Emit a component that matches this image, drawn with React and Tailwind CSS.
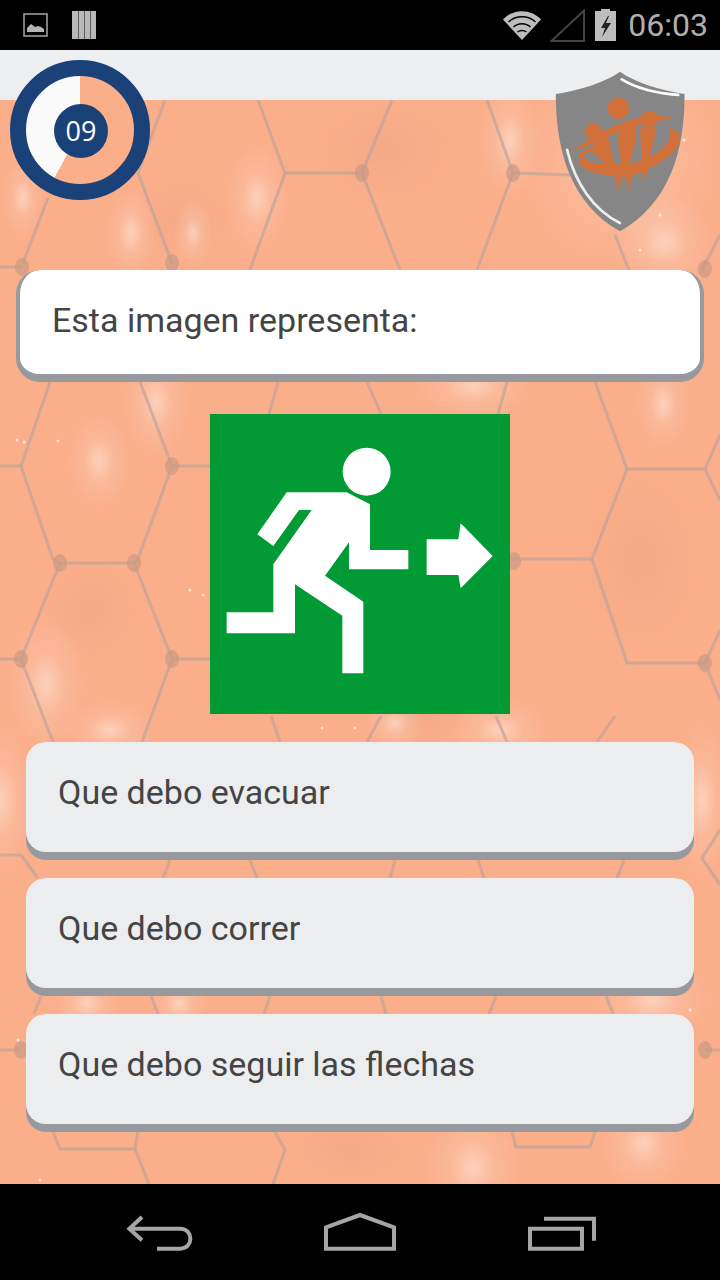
import React from 'react';

const options = ['Que debo evacuar', 'Que debo correr', 'Que debo seguir las flechas'];

// hexagon mesh of the wallpaper, in page coordinates
const hexLines = [
  '258,100 285,173 250,270',
  '285,173 362,173',
  '392,100 362,173 400,270',
  '487,100 513,173 477,270',
  '513,173 570,175',
  '165,100 138,173 172,263',
  '48,198 23,263',
  '0,267 22,267',
  '615,235 629,270',
  '720,235 702,270',
  '50,382 21,466 53,559 60,563 134,563 138,559 172,466 140,382',
  '0,466 21,466',
  '172,466 210,466',
  '595,382 627,469 705,469 720,500',
  '705,469 720,435',
  '627,469 592,559 510,559',
  '592,559 627,663 705,663 720,700',
  '705,663 720,630',
  '60,563 21,659 53,742',
  '134,563 172,659 142,742',
  '0,659 21,659',
  '172,659 210,659',
  '278,382 269,414',
  '367,382 381,414',
  '507,382 498,414',
  '271,716 280,742',
  '381,716 367,742',
  '496,716 507,742',
  '615,716 597,742',
  '0,855 21,855 38,878',
  '170,860 163,878',
  '250,860 257,878',
  '395,860 390,878',
  '478,860 484,878',
  '624,860 617,878',
  '720,830 702,858 720,885',
  '41,996 34,1014',
  '151,996 158,1014',
  '270,996 264,1014',
  '381,996 386,1014',
  '496,996 489,1014',
  '606,996 613,1014',
  '0,1050 21,1050',
  '705,1050 720,1050',
  '53,1132 60,1149 135,1149 138,1132',
  '135,1149 149,1184',
  '275,1132 285,1150 273,1184',
  '512,1132 516,1147 590,1147 595,1132',
];

const hexNodes = [
  [362, 173], [513, 173], [22, 267], [172, 263], [705, 269], [172, 466], [60, 563], [134, 563],
  [514, 561], [21, 659], [172, 659], [705, 663], [21, 1050], [705, 1050],
];

const glows = [
  [131, 233, 26, 46], [193, 233, 20, 36], [257, 198, 32, 56], [23, 198, 22, 40], [510, 141, 32, 60],
  [99, 461, 32, 50], [663, 404, 28, 46], [46, 684, 40, 70], [156, 402, 34, 56], [473, 386, 60, 34],
  [665, 243, 50, 50], [473, 1167, 50, 60], [643, 1143, 44, 50], [395, 723, 30, 28], [110, 730, 46, 32],
  [87, 1003, 36, 34], [179, 1003, 30, 34], [0, 800, 36, 80], [702, 800, 30, 80], [652, 1000, 60, 44],
  [620, 160, 100, 110], [500, 730, 50, 34],
];

// faint darker patches in the middle of some cells
const shades = [
  [385, 150, 70, 50], [180, 220, 50, 40], [640, 560, 60, 90], [90, 610, 50, 50], [350, 1150, 60, 30], [420, 720, 50, 20],
];

const sparkles = [
  [17, 440], [24, 442], [190, 590], [203, 595], [322, 728], [355, 728], [18, 1040], [40, 1180],
  [58, 441], [690, 1010], [684, 140], [660, 215], [640, 250],
];

function Wallpaper() {
  return (
    <svg className="absolute inset-x-0 top-[50px] w-[720px] h-[1084px] blur-[0.6px]" viewBox="0 100 720 1084">
      <defs>
        <radialGradient id="glow">
          <stop offset="0%" stopColor="#fff" stopOpacity="0.42" />
          <stop offset="45%" stopColor="#fff" stopOpacity="0.14" />
          <stop offset="100%" stopColor="#fff" stopOpacity="0" />
        </radialGradient>
        <radialGradient id="shade">
          <stop offset="0%" stopColor="#c98f70" stopOpacity="0.13" />
          <stop offset="100%" stopColor="#c98f70" stopOpacity="0" />
        </radialGradient>
      </defs>
      {shades.map(([cx, cy, rx, ry]) => (
        <ellipse key={`${cx}-${cy}`} cx={cx} cy={cy} rx={rx} ry={ry} fill="url(#shade)" />
      ))}
      {glows.map(([cx, cy, rx, ry]) => (
        <ellipse key={`${cx}-${cy}`} cx={cx} cy={cy} rx={rx} ry={ry} fill="url(#glow)" />
      ))}
      {hexLines.map((points) => (
        <polyline key={points} points={points} fill="none" stroke="#b8a39a" strokeOpacity="0.65" strokeWidth="3" />
      ))}
      {hexNodes.map(([cx, cy]) => (
        <ellipse key={`${cx}-${cy}`} cx={cx} cy={cy} rx="7" ry="9" fill="#c99a82" fillOpacity="0.7" />
      ))}
      {sparkles.map(([cx, cy]) => (
        <circle key={`${cx}-${cy}`} cx={cx} cy={cy} r="1.5" fill="#fff" fillOpacity="0.7" />
      ))}
    </svg>
  );
}

function StatusBar() {
  return (
    <div className="h-[50px] shrink-0 bg-black flex items-center pl-[23px] pr-[12px]">
      <svg width="25" height="24" viewBox="0 0 25 24">
        <rect x="1" y="1" width="23" height="22" fill="none" stroke="#a8a8a8" strokeWidth="1.5" />
        <path d="M4 19v-4l4-4 4 3 3-1 3 1 3 2v3z" fill="#b4b4b4" />
      </svg>
      <svg className="ml-[24px]" width="24" height="30" viewBox="0 0 24 30">
        <path d="M0 1h6v28H0zM6.500 1h5.500v28H6.500zM12.500 1h5.500v28h-5.500zM18.500 1h5.500v28h-5.500z" fill="#b8b8b8" />
      </svg>
      <div className="ml-auto flex items-center">
        <svg width="38" height="29" viewBox="0 0 38 29">
          <path d="M0 8.500C10-2.500 28-2.500 38 8.500L19 29z" fill="#bdbdbd" />
          <path d="M5.500 11C13 4 25 4 32.500 11" fill="none" stroke="#000" strokeWidth="1.500" />
          <path d="M10.500 16C15 11.500 23 11.500 27.500 16" fill="none" stroke="#000" strokeWidth="1.500" />
          <path d="M14.500 21C17 19 21 19 23.500 21" fill="none" stroke="#000" strokeWidth="1.500" />
        </svg>
        <svg className="ml-[9px]" width="35" height="33" viewBox="0 0 35 33">
          <path d="M1.500 32 34 1.500V32z" fill="none" stroke="#444" strokeWidth="2" />
        </svg>
        <svg className="ml-[10px]" width="21" height="32" viewBox="0 0 21 32">
          <path d="M6 0h9v2h6v30H0V2h6z" fill="#bdbdbd" />
          <path d="M13 7 6 19h4l-3 9 9-14h-5l3-7z" fill="#222" />
        </svg>
        <span className="ml-[12px] text-[32px] leading-[50px] text-[#b0b0b0] font-['Roboto',sans-serif]">06:03</span>
      </div>
    </div>
  );
}

function Timer() {
  return (
    <div className="w-[140px] h-[140px] rounded-full border-[16px] border-[#1a4278] bg-[conic-gradient(#fbae8a_0deg_208deg,#fafafa_208deg)] flex items-center justify-center">
      <div className="ml-[2px] mt-[2px] w-[54px] h-[54px] rounded-full bg-[#1a4278] flex items-center justify-center text-[27px] text-white font-['Open_Sans',sans-serif]">
        09
      </div>
    </div>
  );
}

function Shield() {
  return (
    <svg width="130" height="163" viewBox="195 210 390 490">
      <path d="M390 215C340 250 270 270 197 282C197 450 240 610 390 695C540 610 585 450 584 282C510 270 440 250 390 215z" fill="#868686" />
      <path d="M395 238C440 265 500 280 565 285" fill="none" stroke="#fff" strokeWidth="8" strokeLinecap="round" />
      <path d="M231 450C255 550 310 630 390 670" fill="none" stroke="#eee" strokeWidth="8" strokeLinecap="round" />
      <g fill="#d2703a">
        <circle cx="385" cy="325" r="32" />
        <circle cx="478" cy="358" r="26" />
        <circle cx="310" cy="395" r="25" />
        <path d="M248 456C310 400 400 360 470 350C500 345 530 348 552 358C500 358 430 375 375 400C330 420 285 440 248 456z" />
        <path d="M300 442C270 455 258 475 270 495C290 520 340 525 372 528L386 572L396 530L408 530L415 572L428 526C440 524 450 520 458 517L462 542L478 505C520 485 565 455 570 420C572 400 555 388 535 382C548 400 540 425 515 448C480 475 440 490 405 492C350 495 300 490 285 478C278 468 290 458 305 452z" />
        <path d="M322 415 352 405 372 490 340 488 300 450z" />
        <path d="M385 385 440 368 435 430 418 495H395L385 440z" />
        <path d="M450 385H500L490 430 470 495H455z" />
      </g>
    </svg>
  );
}

function ExitSign() {
  return (
    <div className="w-[300px] h-[300px] mx-auto bg-[#029a35]">
      <svg className="blur-[0.5px]" width="300" height="300" viewBox="30 27 900 900">
        <g fill="#fff">
          <ellipse cx="500" cy="200" rx="72" ry="72" />
          <path d="M172 388 260 262H440L510 298V435H625V493H447V412L375 512 490 590V805H427V632L285 538V685H80V622H220V478L335 315H297L220 423z" />
          <path d="M680 403H775L782 355 878 453 782 550 775 510H680z" />
        </g>
      </svg>
    </div>
  );
}

function NavBar() {
  return (
    <div className="h-[96px] shrink-0 bg-black grid grid-cols-3 px-[60px] items-center justify-items-center">
      <svg width="72" height="40" viewBox="71 70 216 120" fill="none" stroke="#a6a6a6" strokeWidth="12">
        <path d="M125 85 87 120 125 155" />
        <path d="M87 120H240C280 120 280 180 240 180H170" />
      </svg>
      <svg width="72" height="40" viewBox="672 70 216 120" fill="none" stroke="#a6a6a6" strokeWidth="12">
        <path d="M678 180V116L780 79 882 116V180z" />
      </svg>
      <svg className="ml-[4px]" width="72" height="40" viewBox="1278 70 216 120" fill="none" stroke="#a6a6a6" strokeWidth="12">
        <path d="M1290 120H1446V180H1290z" />
        <path d="M1332 90H1482V156" />
      </svg>
    </div>
  );
}

export default function App() {
  return (
    <div className="w-[720px] h-[1280px] flex flex-col bg-black overflow-hidden font-['Roboto',sans-serif]">
      <StatusBar />

      <div className="relative flex-1 bg-[#fbae8a]">
        <div className="absolute inset-x-0 top-0 h-[50px] bg-[#eceef0]" />
        <Wallpaper />

        <div className="relative">
          <div className="flex items-start justify-between pl-[10px] pr-[35px] pt-[10px]">
            <Timer />
            <div className="mt-[10px]">
              <Shield />
            </div>
          </div>

          <div className="mx-[16px] mt-[37px] h-[112px] rounded-[24px] bg-white border-x-4 border-b-8 border-t-0 border-[#96999e] pl-[32px] pt-[29px]">
            <p className="text-[34px] leading-[42px] text-[#444444]">Esta imagen representa:</p>
          </div>

          <div className="mt-[32px]">
            <ExitSign />
          </div>

          <div className="mt-[28px] mx-[26px] flex flex-col gap-[26px]">
            {options.map((option) => (
              <button
                key={option}
                className="h-[110px] rounded-[20px] bg-[#ecedef] shadow-[0_8px_0_#96999e] text-left pl-[32px] pb-[10px] text-[34px] text-[#444444]"
              >
                {option}
              </button>
            ))}
          </div>
        </div>
      </div>

      <NavBar />
    </div>
  );
}
